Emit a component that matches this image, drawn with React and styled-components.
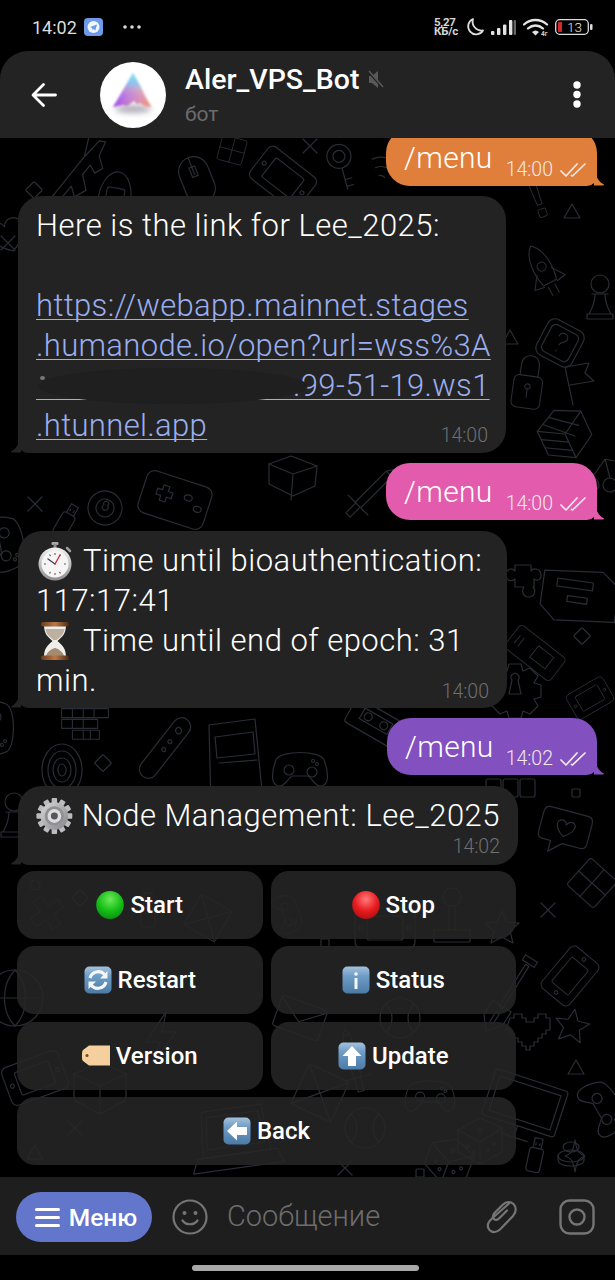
import React from 'react'
import styled, { createGlobalStyle } from 'styled-components'

const GlobalStyle = createGlobalStyle`
  html, body { margin: 0; padding: 0; background: #000; }
  * { box-sizing: border-box; }
`

const Screen = styled.div`
  width: 615px;
  height: 1280px;
  display: flex;
  flex-direction: column;
  background: #000;
  overflow: hidden;
  font-family: Roboto, 'Noto Sans', sans-serif;
  color: #fff;
`

const StatusBar = styled.div`
  height: 51px;
  flex: none;
  display: flex;
  align-items: center;
  justify-content: space-between;
  padding: 3px 22px 0 32px;
`
const StatusGroup = styled.div`
  display: flex;
  align-items: center;
  gap: ${p => p.$gap || 7}px;
`
const Clock = styled.span`
  font-size: 18px;
  color: #dcdcdc;
`
const Speed = styled.span`
  font-size: 11.5px;
  line-height: 9.5px;
  font-weight: 700;
  color: #d8d8d8;
  text-align: left;
  white-space: pre-line;
  letter-spacing: -0.2px;
`

const Header = styled.header`
  height: 87px;
  flex: none;
  display: flex;
  align-items: center;
  background: #232324;
  border-radius: 28px 28px 0 0;
  padding: 0 34px 0 31px;
  position: relative;
  z-index: 2;
`
const Avatar = styled.div`
  width: 66px;
  height: 66px;
  flex: none;
  margin-left: 43px;
  border-radius: 50%;
  background: #fff;
  overflow: hidden;
`
const Titles = styled.div`
  flex: 1;
  margin-left: 19px;
  display: flex;
  flex-direction: column;
  gap: 6px;
`
const NameRow = styled.div`
  display: flex;
  align-items: center;
  gap: 7px;
`
const Name = styled.span`
  font-size: 28.5px;
  line-height: 32px;
  font-weight: 500;
`
const Sub = styled.span`
  font-size: 21px;
  line-height: 24px;
  color: #6c6c6d;
`

const Chat = styled.main`
  flex: 1;
  min-height: 0;
  position: relative;
  display: flex;
  flex-direction: column;
  justify-content: flex-end;
  padding-bottom: 12px;
  overflow: hidden;
`
const Wallpaper = styled.svg`
  position: absolute;
  left: 0;
  top: 0;
  width: 615px;
  height: 1039px;
  fill: none;
  stroke: #2a2d35;
  stroke-width: 1.2;
  stroke-linecap: round;
  stroke-linejoin: round;
`

const Bubble = styled.div`
  position: relative;
  flex: none;
  background: ${p => p.$color || '#232324'};
  border-radius: 24px;
  margin-top: ${p => p.$top || 0}px;
  &::after {
    content: '';
    position: absolute;
    bottom: 0;
    width: 12px;
    height: 22px;
    background: inherit;
  }
`
const OutBubble = styled(Bubble)`
  align-self: flex-end;
  margin-right: 18px;
  width: ${p => p.$width || 211}px;
  height: 57px;
  padding: 0 11px 0 18px;
  display: flex;
  align-items: center;
  border-bottom-right-radius: 10px;
  &::after {
    right: -9px;
    clip-path: path('M0 0 C1 12 4 18 10 21 Q10 22 9 22 L0 22 Z');
  }
`
const InBubble = styled(Bubble)`
  align-self: flex-start;
  margin-left: 18px;
  width: ${p => p.$width}px;
  padding: 10px 18px 7px 18px;
  border-bottom-left-radius: 10px;
  &::after {
    left: -9px;
    clip-path: path('M12 0 C11 12 8 18 2 21 Q2 22 3 22 L12 22 Z');
  }
`
const Line = styled.div`
  font-size: 31px;
  line-height: 40px;
  font-weight: 340;
  letter-spacing: 0.5px;
  white-space: pre;
  min-height: 40px;
  display: flex;
  align-items: center;
  gap: 9px;
`
const OutText = styled.span`
  font-size: 30px;
  line-height: 40px;
  font-weight: 340;
  letter-spacing: 0.3px;
  margin: 2px auto 0 0;
`
const LinkLine = styled.a`
  display: block;
  font-size: 31px;
  line-height: 40px;
  font-weight: 340;
  letter-spacing: 0.35px;
  word-spacing: ${p => p.$fill || 0}px;
  white-space: pre;
  color: #9aaeee;
  text-decoration: underline;
  text-decoration-thickness: 1px;
  text-underline-offset: 3px;
  text-decoration-skip-ink: none;
`
const Redaction = styled.div`
  position: absolute;
  left: 20px;
  top: 172px;
  width: 270px;
  height: 36px;
  border-radius: 50%;
  background: #1f1f20;
  &::before {
    content: '';
    position: absolute;
    left: 2px;
    top: 8px;
    width: 5px;
    height: 4px;
    border-radius: 50%;
    background: #77777a;
  }
`
const LastLine = styled.div`
  display: flex;
  justify-content: space-between;
  align-items: flex-end;
`
const Meta = styled.div`
  display: flex;
  align-items: center;
  gap: 7px;
  margin-top: ${p => p.$top || 0}px;
  margin-bottom: ${p => p.$drop ? -p.$drop : 0}px;
`
const Time = styled.span`
  font-size: 19.5px;
  line-height: 22px;
  font-weight: 300;
  color: ${p => (p.$out ? '#f3e9ea' : '#6f6f70')};
`

const Keyboard = styled.div`
  margin: 6px 0 0 17px;
  width: 499px;
  display: grid;
  grid-template-columns: 1fr 1fr;
  grid-auto-rows: 68px;
  gap: 7.5px 8px;
  position: relative;
`
const KeyButton = styled.button`
  grid-column: ${p => (p.$wide ? 'span 2' : 'auto')};
  border: 0;
  padding: 0;
  border-radius: 18px;
  background: rgba(38, 38, 39, 0.86);
  color: #fff;
  font-family: inherit;
  font-size: 24px;
  font-weight: 500;
  display: flex;
  align-items: center;
  justify-content: center;
  gap: 6px;
`

const InputBar = styled.footer`
  height: 78px;
  flex: none;
  display: flex;
  align-items: center;
  background: #1e1e1f;
  padding: 2px 20px 0 16px;
  position: relative;
`
const MenuButton = styled.button`
  width: 136px;
  height: 50px;
  flex: none;
  border: 0;
  padding: 0 0 0 4px;
  border-radius: 25px;
  background: #6276cc;
  color: #fff;
  font-family: inherit;
  font-size: 24.5px;
  font-weight: 500;
  display: flex;
  align-items: center;
  justify-content: center;
  gap: 9px;
  margin-right: 20px;
`
const Placeholder = styled.span`
  flex: 1;
  margin: -3px 0 0 19px;
  font-size: 29px;
  font-weight: 300;
  color: #6d6d6e;
`
const ClipSlot = styled.span`
  display: flex;
  margin-right: 42px;
`
const NavBar = styled.div`
  height: 25px;
  flex: none;
  display: flex;
  justify-content: center;
  align-items: center;
  padding: 0 4px 0 0;
`
const Handle = styled.div`
  width: 227px;
  height: 6px;
  border-radius: 3px;
  background: #a8a8a8;
`

/* --- drawn icons --- */

const Icon = ({ size = 24, h, vb = '0 0 24 24', children, style }) => (
  <svg width={size} height={h || size} viewBox={vb} fill="none" style={style}>
    {children}
  </svg>
)

const TelegramTile = () => (
  <Icon size={19} h={18} vb="0 0 19 18">
    <rect width="19" height="18" rx="4" fill="#6d9bea" />
    <circle cx="9.5" cy="9" r="6" fill="#f1f5fd" />
    <path d="M6 9l7-2.6-1.6 6.2-2-1.6-1 1-.3-2z" fill="#6d9bea" />
  </Icon>
)

const Moon = () => (
  <Icon size={20} vb="0 0 20 20">
    <path d="M8 2a8 8 0 1 0 10 11.5A9 9 0 0 1 8 2z" stroke="#dcdcdc" strokeWidth="1.8" strokeLinejoin="round" />
  </Icon>
)

const Signal = () => (
  <Icon size={25} h={17} vb="0 0 25 17">
    <rect x="0" y="12" width="3.4" height="4" rx="1" fill="#e4e4e4" />
    <rect x="6" y="9" width="3.4" height="7" rx="1" fill="#e4e4e4" />
    <rect x="12" y="5.5" width="3.4" height="10.5" rx="1" fill="#e4e4e4" />
    <rect x="18" y="1" width="3.4" height="15" rx="1" fill="#e4e4e4" />
    <rect x="22.6" y="1" width="2.4" height="15" rx="1" fill="#666" />
  </Icon>
)

const Wifi = () => (
  <Icon size={26} h={18} vb="0 0 26 18">
    <path d="M1 6.5C7.5.5 17.5.5 24 6.5" stroke="#e4e4e4" strokeWidth="2.3" strokeLinecap="round" />
    <path d="M5 10.5c4.500-4 10.500-4 15 0" stroke="#e4e4e4" strokeWidth="2.300" strokeLinecap="round" />
    <path d="M9 14c2.500-2 4.500-2 7 0l-3.500 3.500z" fill="#e4e4e4" />
    <text x="18" y="17.500" fontSize="6.500" fontFamily="Roboto" fontWeight="700" fill="#d0d0d0">4г</text>
  </Icon>
)

const Battery = () => (
  <Icon size={38} h={16} vb="0 0 38 16">
    <rect x=".7" y=".7" width="32.600" height="14.600" rx="4" stroke="#dcdcdc" strokeWidth="1.300" />
    <rect x="3" y="3" width="4" height="10" rx="1" fill="#d8262c" />
    <text x="12" y="13" fontSize="13.500" fontFamily="Roboto" fontWeight="300" fill="#e4e4e4">13</text>
    <rect x="35" y="5" width="2.500" height="6" rx="1.200" fill="#dcdcdc" />
  </Icon>
)

const BackArrow = () => (
  <Icon size={26} h={26} vb="0 0 26 26">
    <path d="M24.500 13H2.500M12.500 2.500L2 13l10.500 10.500" stroke="#fff" strokeWidth="2.800" strokeLinecap="round" strokeLinejoin="round" />
  </Icon>
)

const AvatarArt = () => (
  <svg width="66" height="66" viewBox="0 0 66 66">
    <defs>
      <linearGradient id="avPurple" x1="0" y1="1" x2="1" y2="0">
        <stop offset="0" stopColor="#8a2cf5" />
        <stop offset=".5" stopColor="#a870f0" stopOpacity=".8" />
        <stop offset="1" stopColor="#7fe6ee" stopOpacity=".1" />
      </linearGradient>
      <linearGradient id="avTop" x1="0" y1="0" x2="0" y2="1">
        <stop offset="0" stopColor="#6fe8e6" />
        <stop offset=".5" stopColor="#7fc6f0" stopOpacity=".7" />
        <stop offset="1" stopColor="#ff9a70" stopOpacity="0" />
      </linearGradient>
      <linearGradient id="avOrange" x1="0" y1="0" x2="1" y2="1">
        <stop offset=".3" stopColor="#d9a0d8" stopOpacity="0" />
        <stop offset="1" stopColor="#ff9560" />
      </linearGradient>
      <filter id="avBlur" x="-30%" y="-30%" width="160%" height="160%">
        <feGaussianBlur stdDeviation="1" />
      </filter>
      <filter id="avShadow" x="-30%" y="-100%" width="160%" height="300%">
        <feGaussianBlur stdDeviation="3" />
      </filter>
    </defs>
    <ellipse cx="33" cy="47" rx="18" ry="3.500" fill="#57506a" opacity=".55" filter="url(#avShadow)" />
    <g filter="url(#avBlur)">
      <path d="M33 11L13 45l10-2 4 1 7-5 3 3 3-1 5 3 6 1z" fill="url(#avPurple)" />
      <path d="M33 11L13 45l10-2 4 1 7-5 3 3 3-1 5 3 6 1z" fill="url(#avOrange)" />
      <path d="M33 11L20 33h26z" fill="url(#avTop)" />
    </g>
  </svg>
)

const MutedIcon = () => (
  <Icon size={17} h={19} vb="0 0 17 19">
    <path d="M2 6h3l6-5v17l-6-5H2z" fill="#59595a" />
    <path d="M1 1l15 17" stroke="#232324" strokeWidth="2.500" />
    <path d="M2 1l14 16" stroke="#59595a" strokeWidth="1.500" />
  </Icon>
)

const Kebab = () => (
  <Icon size={8} h={27} vb="0 0 8 27">
    <circle cx="4" cy="4" r="3.700" fill="#fff" />
    <circle cx="4" cy="13.500" r="3.700" fill="#fff" />
    <circle cx="4" cy="23" r="3.700" fill="#fff" />
  </Icon>
)

const Checks = () => (
  <Icon size={26} h={16} vb="0 0 26 16">
    <path d="M1 9l5 5L17 2M11.500 13.500l1 .5L25 2" stroke="#f3e9ea" strokeWidth="1.700" strokeLinecap="round" strokeLinejoin="round" />
  </Icon>
)

const Stopwatch = () => (
  <Icon size={38} h={40} vb="0 0 38 40">
    <defs>
      <linearGradient id="swRim" x1="0" y1="0" x2="0" y2="1">
        <stop offset="0" stopColor="#f2f2f2" />
        <stop offset="1" stopColor="#8e8e92" />
      </linearGradient>
    </defs>
    <rect x="15.500" y="1" width="7" height="3" rx="1" fill="#a8a8a8" />
    <rect x="17.500" y="3" width="3" height="5" fill="#8a8a8a" />
    <path d="M31 7l3 3" stroke="#9a9a9a" strokeWidth="2.500" strokeLinecap="round" />
    <circle cx="19" cy="23" r="16.500" fill="url(#swRim)" />
    <circle cx="19" cy="23" r="13.500" fill="#f6f5f4" />
    <path d="M19 12v2M19 32v2M8 23h2M28 23h2M13.500 13.500l1 1.600M24.500 13.500l-1 1.600M13.500 32.500l1-1.600M24.500 32.500l-1-1.600" stroke="#5a5a66" strokeWidth="1.100" />
    <path d="M19 23L12 18" stroke="#3c3c58" strokeWidth="1.300" strokeLinecap="round" />
    <path d="M19 23L24 14" stroke="#c8283a" strokeWidth="1.300" strokeLinecap="round" />
  </Icon>
)

const Hourglass = () => (
  <Icon size={38} h={40} vb="0 0 38 40">
    <defs>
      <linearGradient id="hgWood" x1="0" y1="0" x2="1" y2="0">
        <stop offset="0" stopColor="#6a3d1e" />
        <stop offset=".5" stopColor="#b9794a" />
        <stop offset="1" stopColor="#4d2a12" />
      </linearGradient>
    </defs>
    <path d="M8 4h22c0 9-4 12-8.500 16 4.500 4 8.500 7 8.500 16H8c0-9 4-12 8.500-16C12 16 8 13 8 4z" fill="#f0eeea" />
    <path d="M9.500 8h19c-.5 5-4 8-8 11h-3c-4-3-7.500-6-8-11z" fill="#bdb0a0" />
    <path d="M10 35c1-4 5-7 9-8 4 1 8 4 9 8z" fill="#a58a70" />
    <rect x="5" y="1" width="28" height="4.500" rx="2" fill="url(#hgWood)" />
    <rect x="5" y="34.500" width="28" height="4.500" rx="2" fill="url(#hgWood)" />
  </Icon>
)

const gearTeeth = Array.from({ length: 12 }, (_, i) => i * 30)

const Gear = () => (
  <Icon size={38} vb="0 0 40 40">
    <defs>
      <linearGradient id="gearMetal" x1="0" y1="0" x2="1" y2="1">
        <stop offset="0" stopColor="#d8d8da" />
        <stop offset="1" stopColor="#85858a" />
      </linearGradient>
    </defs>
    {gearTeeth.map(a => (
      <rect key={a} x="17" y="0.500" width="6" height="8" rx="1" fill="#bcbcc0" transform={`rotate(${a} 20 20)`} />
    ))}
    <circle cx="20" cy="20" r="15" fill="url(#gearMetal)" />
    <circle cx="20" cy="20" r="10.500" fill="#8f8f94" />
    <circle cx="20" cy="20" r="7.500" fill="#dcdcde" />
    <circle cx="20" cy="20" r="3.800" fill="#55555b" />
  </Icon>
)

const Ball = ({ id, light, mid, dark }) => (
  <Icon size={28} vb="0 0 28 28">
    <defs>
      <radialGradient id={id} cx=".5" cy=".3" r=".75">
        <stop offset="0" stopColor={light} />
        <stop offset=".55" stopColor={mid} />
        <stop offset="1" stopColor={dark} />
      </radialGradient>
    </defs>
    <ellipse cx="14" cy="14" rx="13.800" ry="14" fill={`url(#${id})`} />
  </Icon>
)

const Tile = ({ id, children }) => (
  <Icon size={28} vb="0 0 28 28">
    <defs>
      <linearGradient id={id} x1="0" y1="0" x2="0" y2="1">
        <stop offset="0" stopColor="#a5c2dc" />
        <stop offset=".35" stopColor="#6f9dc6" />
        <stop offset="1" stopColor="#4b7aa6" />
      </linearGradient>
    </defs>
    <rect x=".5" y=".5" width="27" height="27" rx="5" fill={`url(#${id})`} />
    {children}
  </Icon>
)

const Tag = () => (
  <Icon size={28} h={21} vb="0 0 28 21">
    <path d="M7 .5h21v20H7L1 16c-1-1-1-2-1-5s0-5 1-6z" fill="#f6cf9e" />
    <circle cx="5" cy="10.500" r="1.500" fill="#6b4a22" />
  </Icon>
)

const Smile = () => (
  <Icon size={36} vb="0 0 36 36">
    <circle cx="18" cy="18" r="16.500" stroke="#757576" strokeWidth="2.200" />
    <circle cx="12.500" cy="14" r="2" fill="#757576" />
    <circle cx="23.500" cy="14" r="2" fill="#757576" />
    <path d="M10.500 21.500c3.500 5 11.500 5 15 0" stroke="#757576" strokeWidth="2.200" strokeLinecap="round" />
  </Icon>
)

const Clip = () => (
  <Icon size={32} h={36} vb="0 0 32 36">
    <path d="M24 4.500L7 19.500c-5 4.500-5 8.500-2.500 11.500 3 3 7 2.500 10.500-.5L28 17c3.500-4 3.500-9 .5-12-3-3-7.500-2.500-10.500.5L9.500 14c-2 2.500-2 4.500-.5 6s3.500 1 5.500-1L22 11.500" stroke="#757576" strokeWidth="2.200" strokeLinecap="round" />
  </Icon>
)

const Camera = () => (
  <Icon size={36} vb="0 0 36 36">
    <rect x="1.500" y="1.500" width="33" height="33" rx="9" stroke="#757576" strokeWidth="2.400" />
    <circle cx="18" cy="18" r="7.500" stroke="#757576" strokeWidth="2.400" />
  </Icon>
)

const Burger = () => (
  <Icon size={25} h={21} vb="0 0 25 21">
    <path d="M1.500 2.500h22M1.500 10.500h22M1.500 18.500h22" stroke="#fff" strokeWidth="3" strokeLinecap="round" />
  </Icon>
)

/* --- wallpaper doodles, each drawn round its own 0,0 --- */

const doodles = {
  rifle: <path d="M-38 4l50-8 22-2 4 5-14 6-6 12-9-2 2-9-12 2-8 14-13-3 5-10-22 3zM12-4l20-14" />,
  diamond: <rect x="-6" y="-6" width="12" height="12" rx="1" transform="rotate(45)" />,
  square: <rect x="-4" y="-4" width="8" height="8" rx="1" />,
  dot: <circle r="5" />,
  cross: <path d="M-7-7L7 7M7-7L-7 7" />,
  tri: <path d="M0-8l8 14h-16z" />,
  egg: <><path d="M0-27c12 0 18 18 18 30S10 24 0 24s-18-9-18-21S-12-27 0-27z" /><rect x="-10" y="-9" width="20" height="16" rx="3" /></>,
  mouse: <><rect x="-15" y="-24" width="30" height="48" rx="15" /><path d="M0-24V-6M-3-14h6v10h-6z" /></>,
  window: <><rect x="-18" y="-18" width="36" height="36" rx="3" /><path d="M0-18v36M-18 0h36" /></>,
  handheld: <><rect x="-30" y="-20" width="60" height="40" rx="6" /><rect x="-18" y="-12" width="36" height="24" rx="2" /><circle cx="24" r="2" /><circle cx="-24" r="2" /></>,
  magnifier: <><circle cy="-12" r="12" /><circle cy="-12" r="6" /><path d="M0 0v22M0 12h7M0 19h7" /></>,
  wifi: <path d="M-15-4C-7-12 7-12 15-4M-9 3C-4-2 4-2 9 3M-3 9c2-1 4-1 6 0" />,
  heart: <path d="M0 16C-22 2-20-16-8-16c4 0 7 3 8 6 1-3 4-6 8-6 12 0 14 18-8 32z" />,
  bang: <><path d="M-5-30h10l-2 36h-6z" /><rect x="-5" y="12" width="10" height="10" rx="2" /></>,
  rocket: <><path d="M0-34c12 10 12 32 8 46H-8c-4-14-4-36 8-46z" /><circle cy="-8" r="5" /><path d="M-9-2l-10 14 11 2M9-2l10 14-11 2M-4 16v10M4 16v10" /></>,
  pawn: <><circle cy="-14" r="9" /><path d="M-8-4h16M-5-4c0 10-3 14-6 20h22c-3-6-6-10-6-20M-13 16h26v5h-26z" /></>,
  question: <><rect x="-20" y="-20" width="40" height="40" rx="8" /><rect x="-15" y="-15" width="30" height="30" rx="5" /><path d="M-4-6c0-6 9-6 9 0 0 4-5 4-5 8M0 8v1" /></>,
  lock: <><rect x="-16" y="-8" width="32" height="36" rx="6" /><path d="M-10-8v-12c0-14 20-14 20 0v12M0 6v10" /><circle cy="4" r="3" /></>,
  flag: <path d="M-10-16L-2 22M-10-16l24-4-4 10 9 8-24 4" />,
  rubik: <><path d="M0-26l24 12v26L0 26-24 12v-26z" /><path d="M0 0v26M0 0l24-14M0 0l-24-14M-16-18L8 6M-8-22L16-2M-24-5L0 9M-24 4L0 18" /></>,
  cherry: <><circle cx="-9" cy="12" r="7" /><circle cx="9" cy="12" r="7" /><path d="M-9 5L4-14M9 5L4-14l9 2" /></>,
  eight: <><circle r="17" /><circle r="9" /><path d="M-2-3a2.500 2.500 0 1 1 4 0 3 3 0 1 1-4 0z" /></>,
  gameboy: <><rect x="-34" y="-22" width="68" height="44" rx="8" /><path d="M-20-6h5v-5h6v5h5v6h-5v5h-6v-5h-5z" /><ellipse cx="12" cy="-6" rx="4" ry="3" /><ellipse cx="24" cy="2" rx="4" ry="3" /></>,
  usb: <><rect x="-7" y="-10" width="14" height="24" rx="3" /><path d="M-4-10v-10h8v10M-2-15v2M2-15v2" /></>,
  key: <><path d="M-26-14l22-8 26 10-2 20-22 10-24-12z" /><path d="M-26-14l24 10 24-8M-2-4l-2 26" /></>,
  sword: <path d="M-4-34h8v44h-8zM-14 10h28M-3 10v14h6V10M0-40l4 6h-8z" />,
  keyboard: <><path d="M-26-16h52v10h-52zM-26-4h40v10h-40zM-14 8h30v10h-30z" /><path d="M-14-16v10M-2-16v10M10-16v10M-14-4v10M-2-4v10M-2 8v10M6 8v10" /></>,
  remote: <><rect x="-9" y="-36" width="18" height="72" rx="9" /><circle cy="-22" r="3" /><circle cy="-8" r="2" /><circle cy="2" r="2" /></>,
  arcade: <><path d="M-26-38l46-6 8 82-52 4zM-20-26l38-5 2 22-38 4zM-16 0l38-3M-12 30l34-3" /></>,
  target: <><ellipse rx="20" ry="26" /><ellipse rx="14" ry="19" /><ellipse rx="9" ry="12" /><ellipse rx="4" ry="6" /></>,
  pad: <><path d="M-24-6c4-10 44-10 48 0 4 10 6 24-2 26-6 2-10-8-14-10H-8c-4 2-8 12-14 10-8-2-6-16-2-26z" /><circle cx="-11" cy="4" r="5" /><circle cx="12" cy="6" r="5" /><circle cx="13" cy="-5" r="1.500" /><circle cx="17" cy="-2" r="1.500" /></>,
  vhs: <><rect x="-28" y="-14" width="56" height="28" rx="3" /><rect x="-16" y="-8" width="32" height="12" /><circle cx="-9" cy="-2" r="4" /><circle cx="9" cy="-2" r="4" /></>,
  puzzle: <path d="M-6-18h12v6c3-4 10-2 10 4s-5 6-7 4v8H8c3 3 2 10-4 10s-8-6-5-10h-9v-8c-3 3-9 2-9-4s6-8 9-4v-6z" />,
  printer: <><path d="M-36-18l58-6 18 14v34l-60 6-16-14z" /><rect x="-22" y="-12" width="36" height="8" /><rect x="-10" y="4" width="20" height="6" /></>,
  device: <><rect x="-36" y="-18" width="72" height="36" rx="5" /><rect x="-2" y="-10" width="24" height="18" /><path d="M-28-6v12M-22-6v12" /></>,
  gear: <><path d="M-6-24h12l2 7 7-3 8 8-4 7 7 2v12l-7 2 4 7-8 8-7-3-2 7H-6l-2-7-7 3-8-8 4-7-7-2v-12l7-2-4-7 8-8 7 3z" /><path d="M-3-8a4 4 0 1 1 6 0l3 14h-12z" /></>,
  keys: <><rect x="-24" y="-9" width="15" height="18" rx="2" /><rect x="-7" y="-9" width="15" height="18" rx="2" /><rect x="10" y="-9" width="15" height="18" rx="2" /></>,
  speech: <><path d="M-20-22h38c4 0 6 3 6 7v20c0 4-2 6-6 6H0L-12 22V11h-8c-4 0-6-2-6-6v-20c0-4 2-7 6-7z" /><path d="M-1 4c-12-8-10-16-4-16 2 0 4 2 4 4 1-2 3-4 5-4 6 0 7 8-5 16z" /></>,
  shovel: <><path d="M-2-42h4v50h-4zM-7-50h14v6h-14zM-11 6h22v16L0 36-11 22z" /><path d="M-2 14h4v12h-4z" /></>,
  star: <path d="M0-17l5 11 12 1-9 8 3 12-11-6-11 6 3-12-9-8 12-1z" />,
  pixel: <path d="M-20-12h4v-4h8v4h4v4h8v-4h4v-4h8v4h4v12h-4v4h-4v4h-4v4h-4v4h-4v4h-4v-4h-4v-4h-4v-4h-4v-4h-4v-4h-4z" />,
  monitor: <><rect x="-38" y="-24" width="76" height="48" rx="3" /><rect x="-32" y="-18" width="64" height="36" /><path d="M0 24v12M-14 36h28" /></>,
  cup: <><ellipse cy="6" rx="13" ry="6" /><ellipse cy="-3" rx="8" ry="5" /><path d="M-13 6v4c0 8 26 8 26 0V6" /></>,
  sparkle: <path d="M0-16C2-4 4-2 10 0 4 2 2 4 0 16-2 4-4 2-10 0-4-2-2-4 0-16z" />,
  dice: <><path d="M-22-8L0-20l22 10v24L0 26l-22-12z" /><path d="M-22-8L0 4l22-14M0 4v22" /><circle cx="-12" cy="8" r="1.500" /><circle cx="-6" cy="14" r="1.500" /><circle cx="8" cy="12" r="1.500" /><circle cx="14" cy="6" r="1.500" /><circle cy="-8" r="2" /></>,
  dpad: <path d="M-7-24H7v17h17V7H7v17H-7V7h-17V-7h17z" />,
  joystick: <><circle cy="-26" r="9" /><path d="M-3-17v24M3-17v24M-18 7h36v12h-36z" /></>,
  bolt: <path d="M6-26L-14 4H0L-8 26 16-6H2z" />,
  globe: <><circle r="28" /><path d="M-28 0h56M0-28c-14 14-14 42 0 56M0-28c14 14 14 42 0 56" /></>,
  envelope: <><rect x="-24" y="-16" width="48" height="32" rx="3" /><path d="M-24-14L0 4l24-18" /></>,
  box: <><path d="M0-26l26 12v26L0 26-26 12v-26z" /><path d="M-26-14L0-2l26-12M0-2v28" /></>,
  laptop: <><path d="M-30-30h60l4 46h-68z" /><path d="M-26-24h52l3 32h-58zM-40 16h80l6 14h-92z" /></>,
  crate: <><rect x="-22" y="-22" width="44" height="44" rx="3" /><path d="M-22-22L22 22M22-22L-22 22" /></>,
  ball: <><circle r="20" /><path d="M-14-14c8 8 8 20 0 28M14-14c-8 8-8 20 0 28" /></>,
}

const placed = [
  ['rifle', 78, 30, -42], ['diamond', 34, 52], ['egg', 115, 58, 10, .9], ['mouse', 197, 42, -22], ['window', 232, 12, 15, .7],
  ['handheld', 283, 40, 38], ['magnifier', 342, 30, -15], ['wifi', 385, 30, 20], ['cross', 310, 8], ['cross', 8, 105], ['heart', 8, 98, -20],
  ['bang', 538, 62, -20, .8], ['tri', 572, 74], ['rocket', 545, 135, -28, .9], ['pawn', 600, 160], ['question', 560, 205, 28],
  ['tri', 510, 200], ['lock', 528, 245, 8, .9], ['flag', 575, 245], ['rubik', 565, 296, -25], ['cherry', 601, 335],
  ['cross', 35, 366], ['eight', 105, 370, 15], ['gameboy', 175, 362, 18], ['usb', 65, 385, 30], ['key', 295, 340], ['sword', 365, 360, 45],
  ['pad', 10, 405, 80], ['keyboard', 85, 585, 0, .9], ['remote', 165, 610, 38], ['arcade', 235, 625], ['target', 62, 632], ['diamond', 103, 625],
  ['pad', 300, 628], ['vhs', 375, 585, 30], ['puzzle', 525, 445], ['printer', 578, 455, 8], ['device', 535, 515, 38, .8], ['diamond', 582, 498],
  ['gear', 515, 550], ['handheld', 590, 560, -30, .7], ['pad', 0, 590, 90], ['pawn', 14, 678], ['keys', 510, 650], ['square', 576, 655],
  ['speech', 565, 695, 15], ['window', 592, 745, 42], ['cross', 548, 772], ['handheld', 570, 838, -50, .9], ['shovel', 505, 863, 32], ['star', 572, 888, 10],
  ['pixel', 530, 892], ['tri', 576, 930], ['monitor', 525, 965, 18], ['pad', 606, 968, 60], ['cup', 571, 1012], ['usb', 535, 1020, 12], ['sparkle', 575, 1018],
  ['dpad', 47, 775, -35, .7], ['dot', 35, 747], ['diamond', 80, 760], ['usb', 148, 775], ['crate', 208, 780, 30, .8], ['pad', 290, 775, 70, .7],
  ['handheld', 385, 790], ['joystick', 452, 785], ['star', 502, 790], ['square', 325, 805],
  ['globe', 15, 860], ['bolt', 160, 900], ['box', 100, 950], ['envelope', 300, 880, 20], ['ball', 400, 880], ['sword', 355, 930, -15],
  ['handheld', 35, 940, -20], ['crate', 320, 955, 25], ['pad', 430, 955, 0, .9], ['laptop', 235, 1000, -8], ['ball', 365, 990], ['dice', 480, 1000], ['dice', 450, 1020, 20],
  ['tri', 35, 1015], ['cross', 75, 990], ['square', 420, 1035], ['cross', 345, 1030],
]

const DoodleLayer = () => (
  <Wallpaper viewBox="0 0 615 1039" aria-hidden="true">
    {placed.map(([kind, x, y, r = 0, s = 1], i) => (
      <g key={i} transform={`translate(${x} ${y}) rotate(${r}) scale(${s})`}>
        {doodles[kind]}
      </g>
    ))}
  </Wallpaper>
)

/* --- page --- */

const Outgoing = ({ color, time, top, width }) => (
  <OutBubble $color={color} $top={top} $width={width}>
    <OutText>/menu</OutText>
    <Meta $top={26}>
      <Time $out>{time}</Time>
      <Checks />
    </Meta>
  </OutBubble>
)

const keys = [
  { label: 'Start', icon: <Ball id="ballGreen" light="#6fe85a" mid="#16c018" dark="#0c8a10" /> },
  { label: 'Stop', icon: <Ball id="ballRed" light="#ff7a7a" mid="#e81c20" dark="#a80e10" /> },
  {
    label: 'Restart',
    icon: (
      <Tile id="tileRestart">
        <path d="M6 12a8.500 8.500 0 0 1 14.500-3.500M22 16a8.500 8.500 0 0 1-14.500 3.500" stroke="#f4f6f8" strokeWidth="3.200" />
        <path d="M23.500 5v7.500H16zM4.500 23v-7.500H12z" fill="#f4f6f8" />
      </Tile>
    ),
  },
  {
    label: 'Status',
    icon: (
      <Tile id="tileStatus">
        <circle cx="14" cy="8" r="1.800" fill="#f4f6f8" />
        <rect x="12.500" y="12" width="3" height="11" fill="#f4f6f8" />
      </Tile>
    ),
  },
  { label: 'Version', icon: <Tag /> },
  {
    label: 'Update',
    icon: (
      <Tile id="tileUpdate">
        <path d="M14 4l9.500 10H18v10h-8V14H4.500z" fill="#fff" />
      </Tile>
    ),
  },
  {
    label: 'Back',
    wide: true,
    icon: (
      <Tile id="tileBack">
        <path d="M4 14l10-9.500V10h10v8H14v5.500z" fill="#fff" />
      </Tile>
    ),
  },
]

export default function App() {
  return (
    <>
      <GlobalStyle />
      <Screen>
        <StatusBar>
          <StatusGroup $gap={7}>
            <Clock>14:02</Clock>
            <TelegramTile />
            <Icon size={20} h={6} vb="0 0 20 6" style={{ marginLeft: 12 }}>
              <circle cx="3" cy="3" r="1.800" fill="#d8d8d8" />
              <circle cx="10" cy="3" r="1.800" fill="#d8d8d8" />
              <circle cx="17" cy="3" r="1.800" fill="#d8d8d8" />
            </Icon>
          </StatusGroup>
          <StatusGroup $gap={6.5}>
            <Speed>{'5,27\nКБ/с'}</Speed>
            <Moon />
            <Signal />
            <Wifi />
            <Battery />
          </StatusGroup>
        </StatusBar>

        <Header>
          <BackArrow />
          <Avatar>
            <AvatarArt />
          </Avatar>
          <Titles>
            <NameRow>
              <Name>Aler_VPS_Bot</Name>
              <MutedIcon />
            </NameRow>
            <Sub>бот</Sub>
          </Titles>
          <Kebab />
        </Header>

        <Chat>
          <DoodleLayer />

          <Outgoing color="#e07f3c" time="14:00" />

          <InBubble $width={488} $top={10}>
            <Line>Here is the link for Lee_2025:</Line>
            <Line />
            <LinkLine>https://webapp.mainnet.stages</LinkLine>
            <LinkLine>.humanode.io/open?url=wss%3A</LinkLine>
            <LinkLine $fill={0.13}>{'\u00a0'.repeat(32)}.99-51-19.ws1</LinkLine>
            <LastLine>
              <LinkLine>.htunnel.app</LinkLine>
              <Meta $drop={1}>
                <Time>14:00</Time>
              </Meta>
            </LastLine>
            <Redaction />
          </InBubble>

          <Outgoing color="#e25bac" time="14:00" top={10} />

          <InBubble $width={489} $top={11}>
            <Line><Stopwatch />Time until bioauthentication:</Line>
            <Line>117:17:41</Line>
            <Line><Hourglass />Time until end of epoch: 31</Line>
            <LastLine>
              <Line>min.</Line>
              <Meta $drop={2}>
                <Time>14:00</Time>
              </Meta>
            </LastLine>
          </InBubble>

          <Outgoing color="#8250bf" time="14:02" top={10} width={210} />

          <InBubble $width={500} $top={11}>
            <Line><Gear />Node Management: Lee_2025</Line>
            <LastLine>
              <span />
              <Meta>
                <Time>14:02</Time>
              </Meta>
            </LastLine>
          </InBubble>

          <Keyboard>
            {keys.map(k => (
              <KeyButton key={k.label} $wide={k.wide}>
                {k.icon}
                {k.label}
              </KeyButton>
            ))}
          </Keyboard>
        </Chat>

        <InputBar>
          <MenuButton>
            <Burger />
            Меню
          </MenuButton>
          <Smile />
          <Placeholder>Сообщение</Placeholder>
          <ClipSlot>
            <Clip />
          </ClipSlot>
          <Camera />
        </InputBar>

        <NavBar>
          <Handle />
        </NavBar>
      </Screen>
    </>
  )
}
